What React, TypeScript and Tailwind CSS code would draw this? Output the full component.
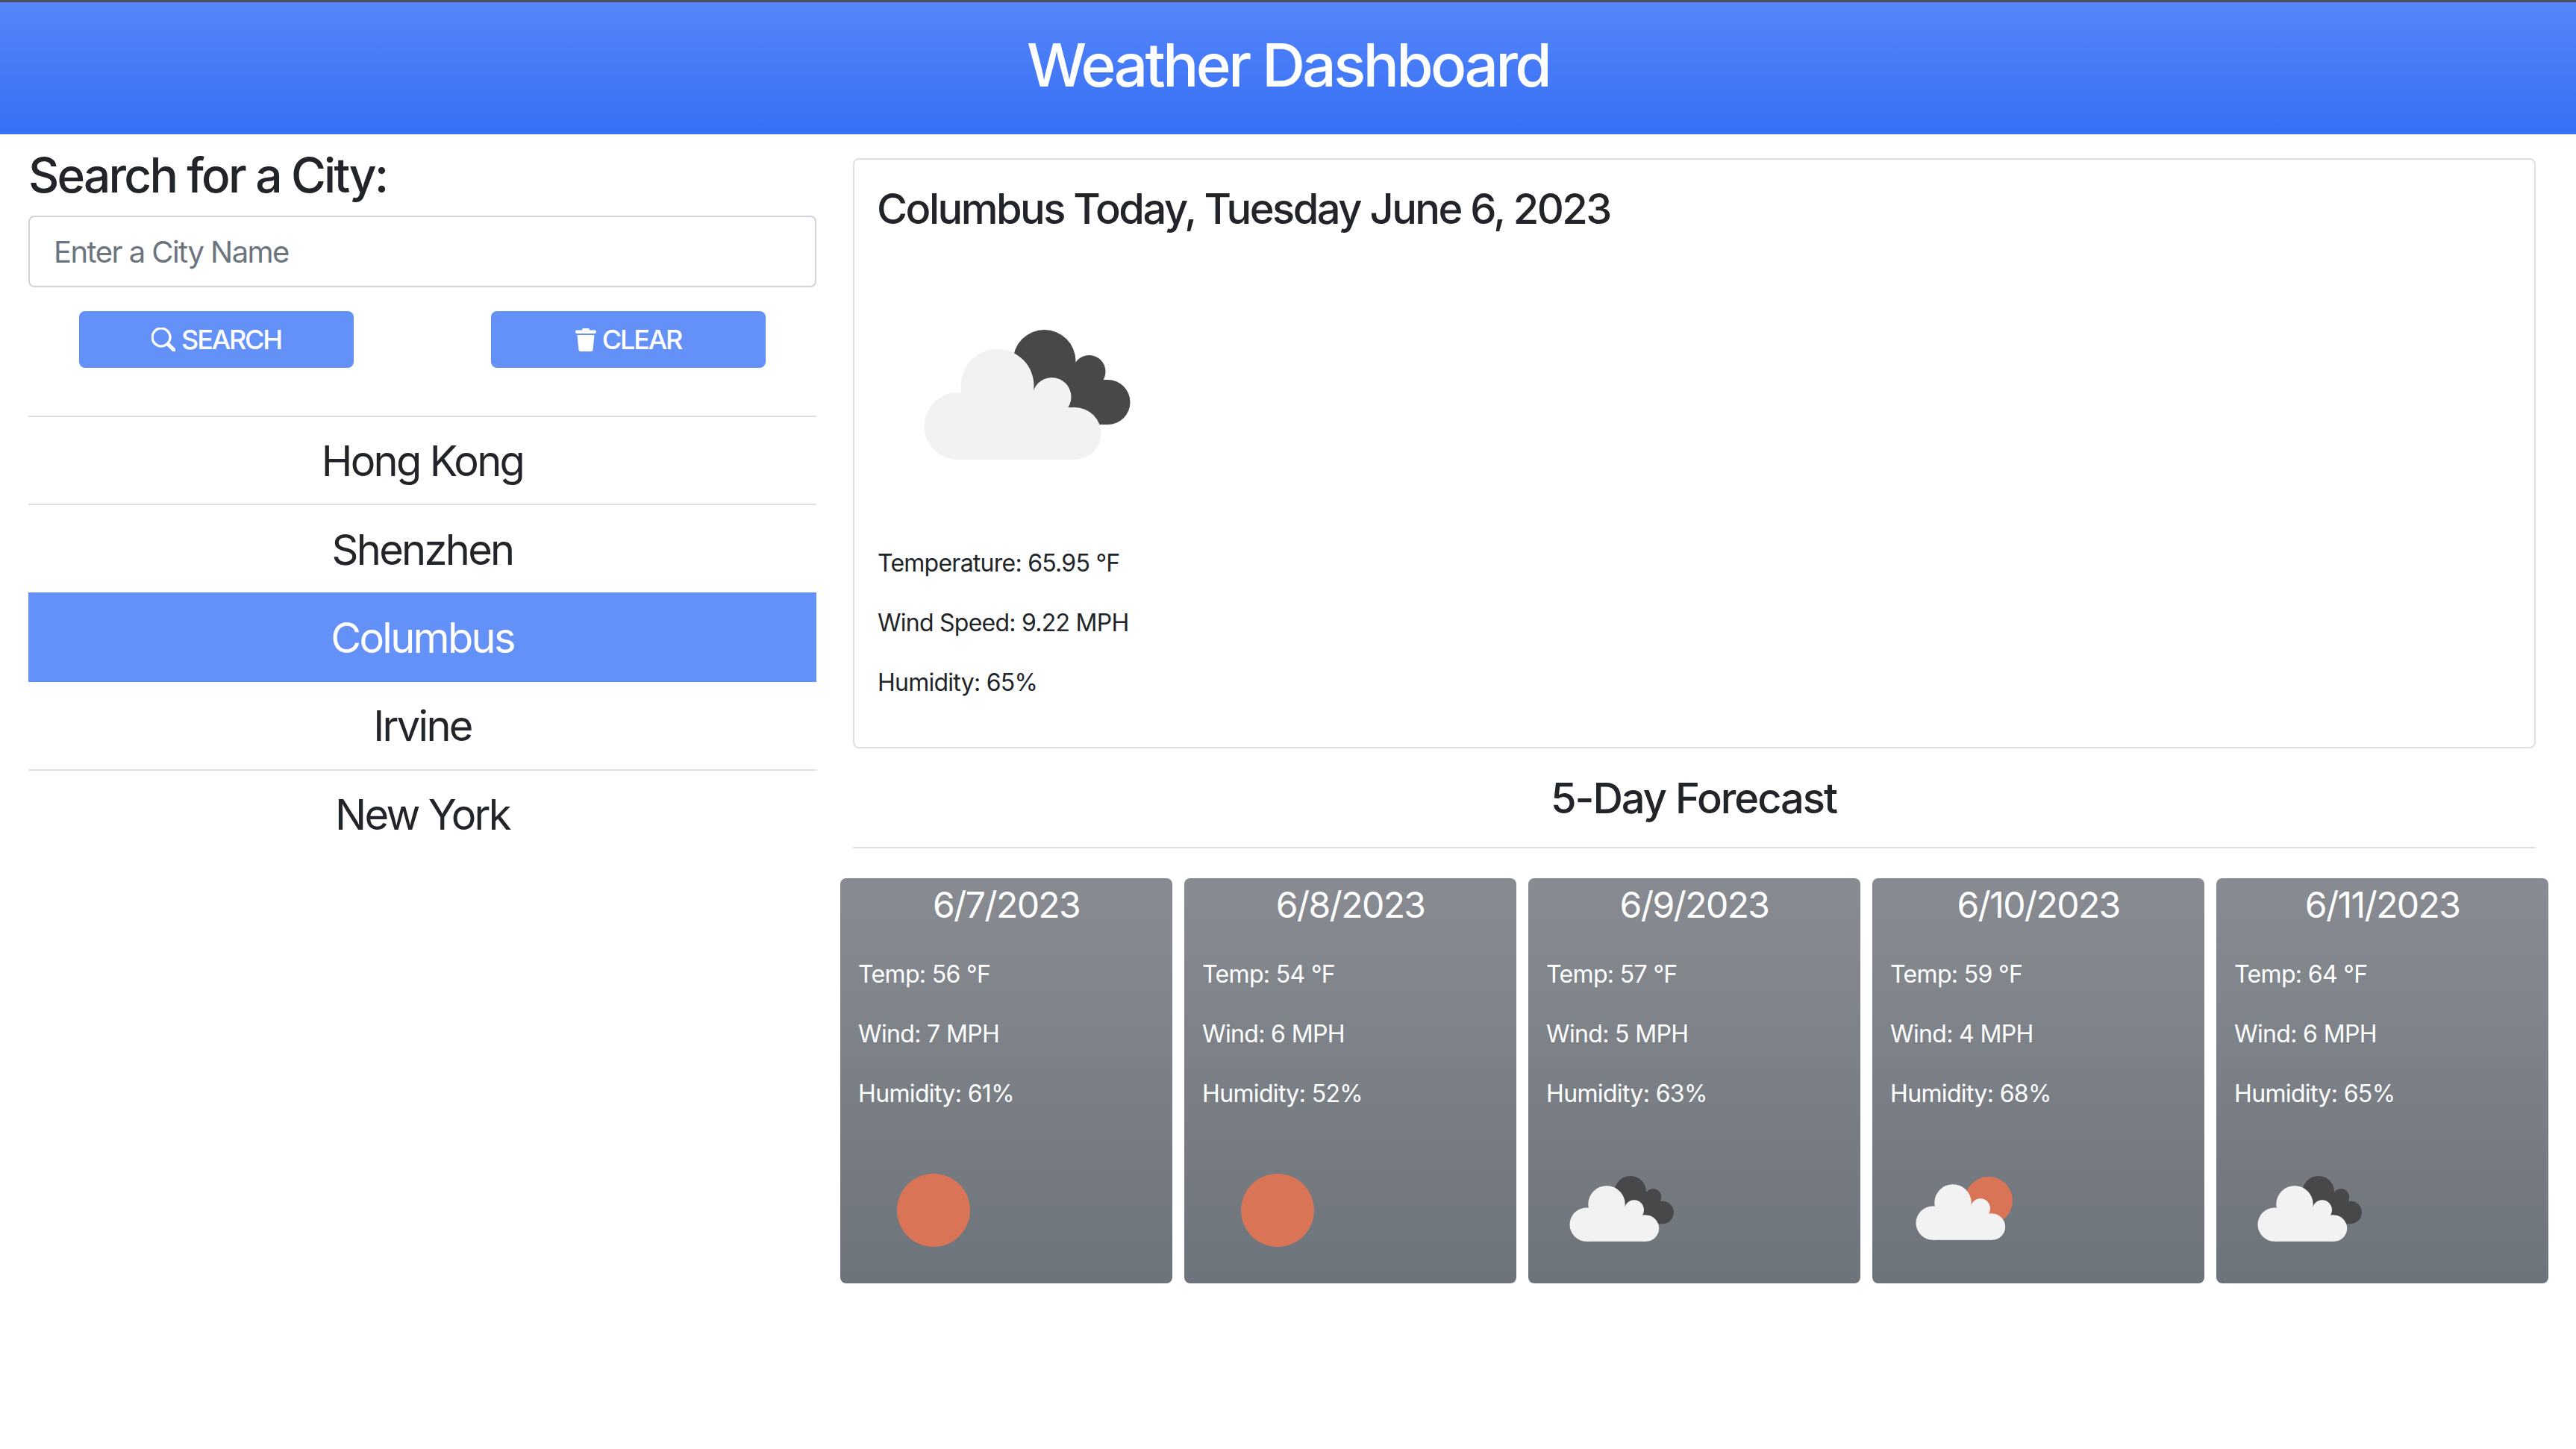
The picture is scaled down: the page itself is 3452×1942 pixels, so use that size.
import React from "react";
import { BsSearch } from "react-icons/bs";

const cities = ["Hong Kong", "Shenzhen", "Columbus", "Irvine", "New York"];

function WhiteCloud() {
  return (
    <g fill="#f2f2f2">
      <circle cx="46" cy="129" r="45" />
      <circle cx="99" cy="75" r="49" />
      <circle cx="172" cy="90" r="26" />
      <circle cx="203" cy="139" r="35" />
      <rect x="46" y="104" width="157" height="70" />
      <rect x="100" y="82" width="80" height="50" />
    </g>
  );
}

function DarkCloud() {
  return (
    <g fill="#48484a">
      <circle cx="162" cy="42" r="42" />
      <circle cx="222" cy="56" r="22" />
      <circle cx="247" cy="97" r="30" />
      <rect x="150" y="67" width="97" height="60" />
      <rect x="150" y="50" width="72" height="30" />
    </g>
  );
}

function TrashIcon() {
  return (
    <svg viewBox="0 0 28 31" className="w-[28px] h-[31px] shrink-0" fill="white">
      <rect x="9" y="0" width="10" height="4" rx="2" />
      <rect x="0" y="2.5" width="28" height="4.5" rx="2" />
      <path d="M2.5 9 H25.5 L23.6 28.2 Q23.3 31 20.6 31 H7.4 Q4.7 31 4.4 28.2 Z" />
    </svg>
  );
}

function Icon({ kind }: { kind: string }) {
  if (kind === "sun") {
    return (
      <svg viewBox="0 0 180 110" className="w-[180px] h-[110px] block">
        <circle cx="101" cy="51" r="49" fill="#d97556" />
      </svg>
    );
  }
  if (kind === "partly") {
    return (
      <svg viewBox="0 0 180 110" className="w-[180px] h-[110px] block">
        <circle cx="132" cy="38" r="32" fill="#d97556" />
        <g transform="translate(34 3) scale(0.505)">
          <WhiteCloud />
        </g>
      </svg>
    );
  }
  return (
    <svg viewBox="0 0 180 110" className="w-[180px] h-[110px] block">
      <g transform="translate(31 5) scale(0.505)">
        <DarkCloud />
        <WhiteCloud />
      </g>
    </svg>
  );
}

const days = [
  { d: "6/7/2023", t: 56, w: 7, h: 61, i: "sun" },
  { d: "6/8/2023", t: 54, w: 6, h: 52, i: "sun" },
  { d: "6/9/2023", t: 57, w: 5, h: 63, i: "clouds" },
  { d: "6/10/2023", t: 59, w: 4, h: 68, i: "partly" },
  { d: "6/11/2023", t: 64, w: 6, h: 65, i: "clouds" },
];

export default function App() {
  return (
    <div className="min-h-[1942px] bg-white text-[#212529] font-['Inter',sans-serif]">
      <header className="h-[180px] border-t-[3px] border-[#4a4f5c] bg-gradient-to-b from-[#5585fa] to-[#3570f5] flex items-center justify-center">
        <h1 className="mb-[10px] text-[80px] leading-[96px] font-medium text-white tracking-[-3.6px]">Weather Dashboard</h1>
      </header>
      <main className="flex items-start pl-[38px] pr-[54px]">
        <section className="w-[1056px] shrink-0">
          <h2 className="mt-[24px] text-[64px] leading-[62px] font-medium tracking-[-2.8px]">Search for a City:</h2>
          <input
            placeholder="Enter a City Name"
            className="mt-[23px] block w-full h-[96px] border-2 border-[#ced4da] rounded-[8px] px-[32px] text-[40px] tracking-[-1.55px] placeholder:text-[#6c757d] outline-none"
          />
          <div className="mt-[32px] flex justify-between px-[68px]">
            <button className="w-[368px] h-[76px] rounded-[8px] bg-[#6391f8] text-white text-[36px] font-medium tracking-[-2.2px] flex items-center justify-center gap-[8px]">
              <BsSearch className="w-[32px] h-[32px] stroke-[0.6] stroke-white" /> SEARCH
            </button>
            <button className="w-[368px] h-[76px] rounded-[8px] bg-[#6391f8] text-white text-[36px] font-medium tracking-[-2.2px] flex items-center justify-center gap-[8px]">
              <TrashIcon /> CLEAR
            </button>
          </div>
          <ul className="mt-[64px]">
            {cities.map((c) => (
              <li
                key={c}
                className={
                  "h-[118.4px] flex items-center justify-center pt-[2px] text-[56px] tracking-[-2.7px] border-t-2 " +
                  (c === "Columbus"
                    ? "bg-[#6391f8] text-white border-[#6391f8]"
                    : c === "Irvine"
                    ? "border-[#6391f8]"
                    : "border-[#dfe0e1]")
                }
              >
                {c}
              </li>
            ))}
          </ul>
        </section>
        <section className="ml-[49px] flex-1 min-w-0">
          <div className="mt-[32px] h-[791px] border-2 border-[#dfdfdf] rounded-[8px] px-[32px]">
            <h3 className="mt-[32px] -ml-[2px] text-[56px] leading-[68px] font-medium tracking-[-2.5px]">Columbus Today, Tuesday June 6, 2023</h3>
            <svg viewBox="0 0 277 174" className="mt-[128px] ml-[60px] w-[278px] h-[174px] block">
              <DarkCloud />
              <WhiteCloud />
            </svg>
            <div className="mt-[99px] -ml-[1px] text-[32px] leading-[80px] tracking-[-0.75px]">
              <p>Temperature: 65.95 °F</p>
              <p>Wind Speed: 9.22 MPH</p>
              <p>Humidity: 65%</p>
            </div>
          </div>
          <h3 className="mt-[28px] -ml-[2px] h-[78px] text-center text-[56px] leading-[78px] font-medium tracking-[-2px]">5-Day Forecast</h3>
          <hr className="mt-[26px] border-t-2 border-[#dfdfdf]" />
          <div className="mt-[40px] -mx-[17px] grid grid-cols-5 gap-[16px]">
            {days.map((d) => (
              <div key={d.d} className="h-[543px] rounded-[8px] bg-gradient-to-b from-[#888c92] to-[#6e747b] text-white px-[24px]">
                <h4 className="pt-[7px] pb-[2px] text-center text-[48px] leading-[58px] tracking-[-1.6px]">{d.d}</h4>
                <div className="mt-[22px] text-[32px] leading-[80px] tracking-[-0.65px]">
                  <p>Temp: {d.t} °F</p>
                  <p>Wind: {d.w} MPH</p>
                  <p>Humidity: {d.h}%</p>
                </div>
                <div className="mt-[65px]">
                  <Icon kind={d.i} />
                </div>
              </div>
            ))}
          </div>
        </section>
      </main>
    </div>
  );
}
